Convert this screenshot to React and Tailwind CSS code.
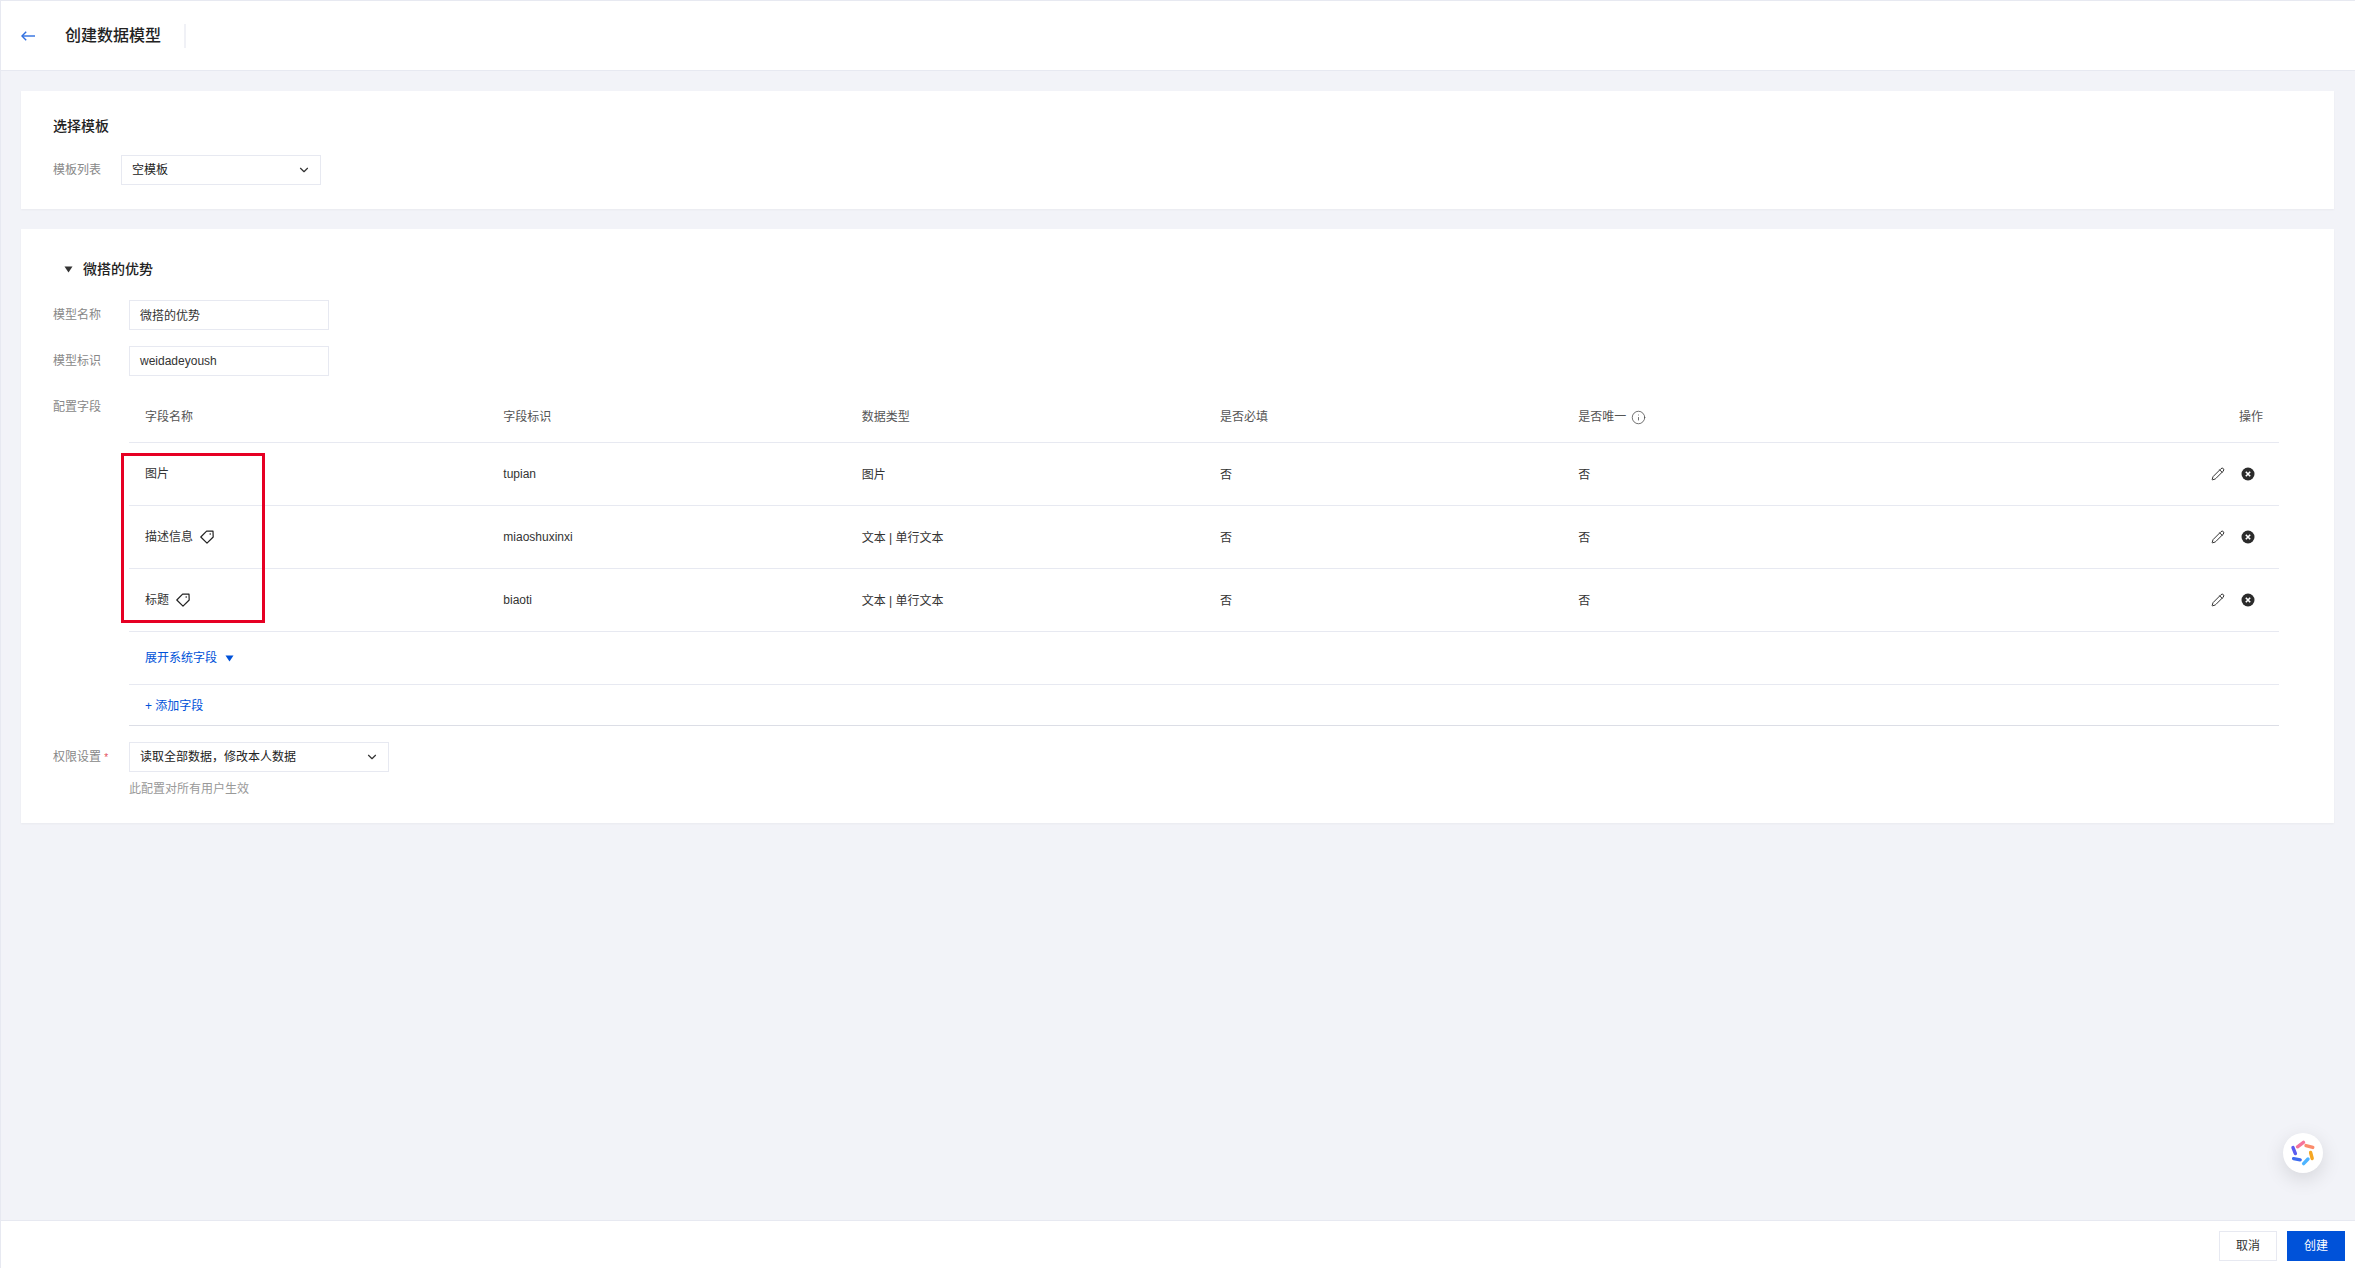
import React from "react";
import { ChevronDown, Info, Pencil } from "lucide-react";

const fontStack =
  "font-['Liberation_Sans','Noto_Sans_CJK_SC',sans-serif]";

const columns = ["字段名称", "字段标识", "数据类型", "是否必填", "是否唯一"];

const rows = [
  { name: "图片", key: "tupian", type: "图片" },
  { name: "描述信息", key: "miaoshuxinxi", type: "文本 | 单行文本", tag: true },
  { name: "标题", key: "biaoti", type: "文本 | 单行文本", tag: true },
];

const BackIcon = () => (
  <svg width="14" height="10" viewBox="0 0 14 10" fill="none" stroke="#2f6fe0" strokeWidth="1.4">
    <path d="M1 5H14" />
    <path d="M5.2 0.8L1 5L5.2 9.2" />
  </svg>
);

const TagIcon = () => (
  <svg width="14" height="14" viewBox="0 0 14 14" fill="none" className="ml-[7px]">
    <path
      d="M0.8 7L6.6 1.2H13L13.2 7L7 13.2Z"
      stroke="#222"
      strokeWidth="1.2"
      strokeLinejoin="round"
    />
    <circle cx="10.2" cy="4" r="0.8" fill="#222" />
  </svg>
);

const CloseIcon = () => (
  <svg width="14" height="14" viewBox="0 0 14 14">
    <circle cx="7" cy="7" r="6.5" fill="#2b2b2b" />
    <path d="M4.8 4.8L9.2 9.2M9.2 4.8L4.8 9.2" stroke="#fff" strokeWidth="1.6" />
  </svg>
);

const Caret = ({ className }) => (
  <svg width="9" height="7" viewBox="0 0 9 7" className={className}>
    <path d="M0.5 0.5H8.5L4.5 6.5Z" fill="currentColor" />
  </svg>
);

const Logo = () => (
  <svg width="40" height="40" viewBox="0 0 40 40" fill="none" strokeWidth="3.4" strokeLinecap="round">
    <path d="M14.5 13.8L20.5 9.4" stroke="#f5739b" />
    <path d="M23 12.6L29.8 14.4" stroke="#fb8c6c" />
    <path d="M27.6 19.5L29.2 25.5" stroke="#f5a623" />
    <path d="M25 26L20.6 30.6" stroke="#4db4ff" />
    <path d="M10.6 25.6L17.2 26.8" stroke="#3d6cf0" />
    <path d="M10 14.6L12.4 20.6" stroke="#5a5cf0" />
  </svg>
);

const SelectBox = ({ width, children }) => (
  <div
    className={`${width} h-[30px] border border-[#e7e9f1] flex items-center justify-between pl-[10px] pr-[9px] text-xs text-[#222]`}
  >
    <span>{children}</span>
    <ChevronDown size={14} strokeWidth={2} className="text-[#333]" />
  </div>
);

const TextBox = ({ cjk, children }) => (
  <div
    className={`w-[200px] h-[30px] border border-[#e7e9f1] flex items-center px-[10px] text-xs text-[#333] ${
      cjk ? "pt-[2px]" : ""
    }`}
  >
    {children}
  </div>
);

const Label = ({ className = "", children }) => (
  <div className={`text-xs text-[#888] ${className}`}>{children}</div>
);

export default function App() {
  return (
    <div
      className={`h-screen w-full flex flex-col overflow-hidden bg-[#f2f3f8] border-l border-[#e7e9f1] relative ${fontStack}`}
    >
      {/* Header */}
      <header className="h-[71px] shrink-0 bg-white border-t border-b border-[#e7e9f1] flex items-center pl-5">
        <BackIcon />
        <h1 className="ml-[30px] pt-[1px] text-base font-medium text-[#222]">创建数据模型</h1>
        <div className="ml-[23px] w-[2px] h-6 bg-[#f0f1f6]" />
      </header>

      {/* Main */}
      <main className="flex-1 pt-5 pl-5 pr-[21px]">
        <section className="bg-white shadow-[0_1px_2px_rgba(0,0,0,0.04)] pt-[25px] pb-6 pl-8">
          <h2 className="h-5 leading-5 text-sm font-medium text-[#222]">选择模板</h2>
          <div className="mt-[19px] flex items-center">
            <Label className="w-[68px]">模板列表</Label>
            <SelectBox width="w-[200px]">空模板</SelectBox>
          </div>
        </section>

        <section className="mt-5 bg-white shadow-[0_1px_2px_rgba(0,0,0,0.04)] pt-[30px] pb-[26px] pl-8 pr-[55px]">
          <div className="h-5 flex items-center pl-[11px]">
            <Caret className="text-[#333]" />
            <h2 className="ml-[10px] text-sm font-medium text-[#222]">微搭的优势</h2>
          </div>

          <div className="mt-[21px] flex items-center">
            <Label className="w-[76px]">模型名称</Label>
            <TextBox cjk>微搭的优势</TextBox>
          </div>
          <div className="mt-4 flex items-center">
            <Label className="w-[76px]">模型标识</Label>
            <TextBox>weidadeyoush</TextBox>
          </div>

          <div className="mt-[14px] flex">
            <Label className="w-[76px] shrink-0 pt-[9px]">配置字段</Label>
            <div className="flex-1 relative text-xs">
              <div className="h-[53px] pt-[2px] grid grid-cols-6 items-center border-b border-[#e7e9f1] text-[#555]">
                {columns.map((col, index) => (
                  <div key={index} className="px-4 flex items-center">
                    {col}
                    {index === 4 && (
                      <Info size={15} strokeWidth={1.2} className="ml-[5px] text-[#444]" />
                    )}
                  </div>
                ))}
                <div className="px-4 text-right">操作</div>
              </div>

              {rows.map((row, index) => (
                <div
                  key={index}
                  className="h-[63px] grid grid-cols-6 items-center border-b border-[#e7e9f1] text-[#333]"
                >
                  <div className="px-4 flex items-center">
                    {row.name}
                    {row.tag && <TagIcon />}
                  </div>
                  <div className="px-4">{row.key}</div>
                  <div className="px-4 pt-[2px]">{row.type}</div>
                  <div className="px-4 pt-[2px]">否</div>
                  <div className="px-4 pt-[2px]">否</div>
                  <div className="pr-6 flex items-center justify-end gap-4">
                    <Pencil size={14} strokeWidth={1.6} className="text-[#222]" />
                    <CloseIcon />
                  </div>
                </div>
              ))}

              <div className="h-[53px] px-4 flex items-center border-b border-[#e7e9f1] text-[#0052d9]">
                展开系统字段
                <Caret className="ml-2" />
              </div>
              <div className="h-[41px] px-4 pt-[1px] flex items-center border-b border-[#dcdee6] text-[#0052d9]">
                + 添加字段
              </div>

              {/* Red annotation box */}
              <div className="absolute left-[-8px] top-[63px] w-[144px] h-[170px] border-[3px] border-[#e60023]" />
            </div>
          </div>

          <div className="mt-4 flex items-center">
            <Label className="w-[76px]">
              权限设置 <span className="text-[10px] text-[#e34d59]">*</span>
            </Label>
            <SelectBox width="w-[260px]">读取全部数据，修改本人数据</SelectBox>
          </div>
          <div className="mt-[9px] ml-[76px] h-4 leading-4 text-xs text-[#999]">此配置对所有用户生效</div>
        </section>
      </main>

      {/* Footer */}
      <footer className="h-[48px] shrink-0 bg-white border-t border-[#e7e9f1] flex justify-end gap-[10px] pt-[10px] pr-[10px]">
        <button className="w-[58px] h-[30px] border border-[#e7e9f1] bg-white text-xs text-[#333]">
          取消
        </button>
        <button className="w-[58px] h-[30px] bg-[#0052d9] text-xs text-white">创建</button>
      </footer>

      {/* Floating assistant */}
      <div className="absolute left-[2282px] top-[1133px] w-10 h-10 rounded-full bg-white shadow-[0_6px_20px_rgba(0,0,0,0.12)]">
        <Logo />
      </div>
    </div>
  );
}
